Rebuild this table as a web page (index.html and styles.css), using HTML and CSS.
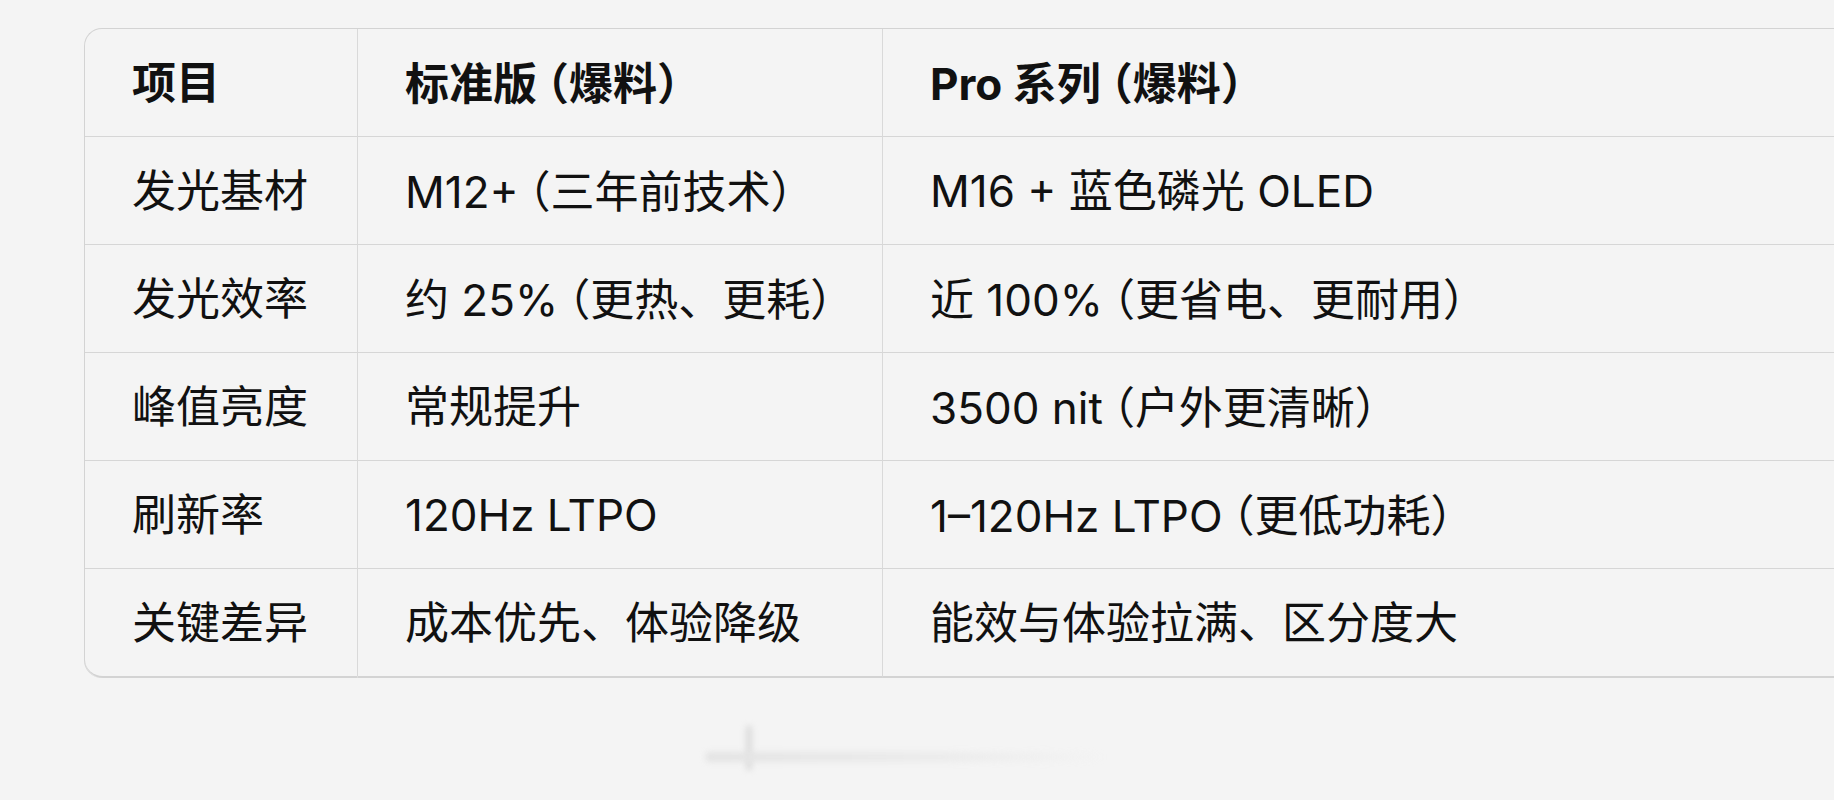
FILE: index.html
```html
<!DOCTYPE html>
<html lang="zh-CN">
<head>
<meta charset="utf-8">
<title>对比表</title>
<link rel="stylesheet" href="styles.css">
</head>
<body>
<div class="page">
  <table class="spec">
    <colgroup>
      <col class="c1"><col class="c2"><col class="c3">
    </colgroup>
    <thead>
      <tr><th>项目</th><th>标准版<span class="lp">（</span>爆料）</th><th>Pro 系列<span class="lp">（</span>爆料）</th></tr>
    </thead>
    <tbody>
      <tr><td>发光基材</td><td>M12+<span class="lp">（</span>三年前技术）</td><td>M16 + 蓝色磷光 OLED</td></tr>
      <tr><td>发光效率</td><td>约 25%<span class="lp">（</span>更热、更耗）</td><td>近 100%<span class="lp">（</span>更省电、更耐用）</td></tr>
      <tr><td>峰值亮度</td><td>常规提升</td><td>3500 nit<span class="lp">（</span>户外更清晰）</td></tr>
      <tr><td>刷新率</td><td>120Hz LTPO</td><td>1–120Hz LTPO<span class="lp">（</span>更低功耗）</td></tr>
      <tr><td>关键差异</td><td>成本优先、体验降级</td><td>能效与体验拉满、区分度大</td></tr>
    </tbody>
  </table>
  <div class="watermark"><span class="wm-bar"></span><span class="wm-line"></span></div>
</div>
</body>
</html>
```
FILE: styles.css
```css
html, body {
  margin: 0;
  padding: 0;
  background: #f4f4f4;
  overflow: hidden;
}
.page {
  width: 1834px;
  height: 800px;
  padding: 28px 0 0 84px;
  box-sizing: border-box;
  position: relative;
  font-family: Inter, "Noto Sans CJK SC", sans-serif;
  color: #111;
}
.spec {
  width: 1820px;
  border-collapse: separate;
  border-spacing: 0;
  border-top: 1px solid #d3d3d3;
  border-left: 1px solid #d3d3d3;
  border-top-left-radius: 18px;
  border-bottom-left-radius: 18px;
  table-layout: fixed;
}
.c1 { width: 273px; }
.c2 { width: 525px; }
.c3 { width: auto; }
.spec th, .spec td {
  height: 107px;
  padding: 0 0 0 47px;
  text-align: left;
  vertical-align: middle;
  font-size: 44px;
  line-height: 1;
  border-bottom: 1px solid #d6d6d6;
  border-right: 1px solid #d9d9d9;
  white-space: nowrap;
}
.spec th:last-child, .spec td:last-child { border-right: none; }
.spec th { font-weight: 700; }
.spec td { font-weight: 400; }
.spec tbody tr:last-child td:first-child { border-bottom-left-radius: 18px; }
.spec tbody tr:last-child td { border-bottom: 2px solid #d3d3d3; }
.lp {
  font-family: "Noto Sans CJK SC", sans-serif;
  font-feature-settings: "halt" 1;
  margin-left: 10px;
}
.watermark {
  position: absolute;
  left: 706px;
  top: 726px;
  width: 420px;
  height: 50px;
  filter: blur(3px);
  opacity: 0.6;
}
.wm-bar {
  position: absolute;
  left: 40px;
  top: 0;
  width: 6px;
  height: 44px;
  background: #c9c9c9;
}
.wm-line {
  position: absolute;
  left: 0;
  top: 26px;
  width: 400px;
  height: 10px;
  background: linear-gradient(90deg, #d8d8d8, #e6e6e6 60%, rgba(230,230,230,0));
}
```
